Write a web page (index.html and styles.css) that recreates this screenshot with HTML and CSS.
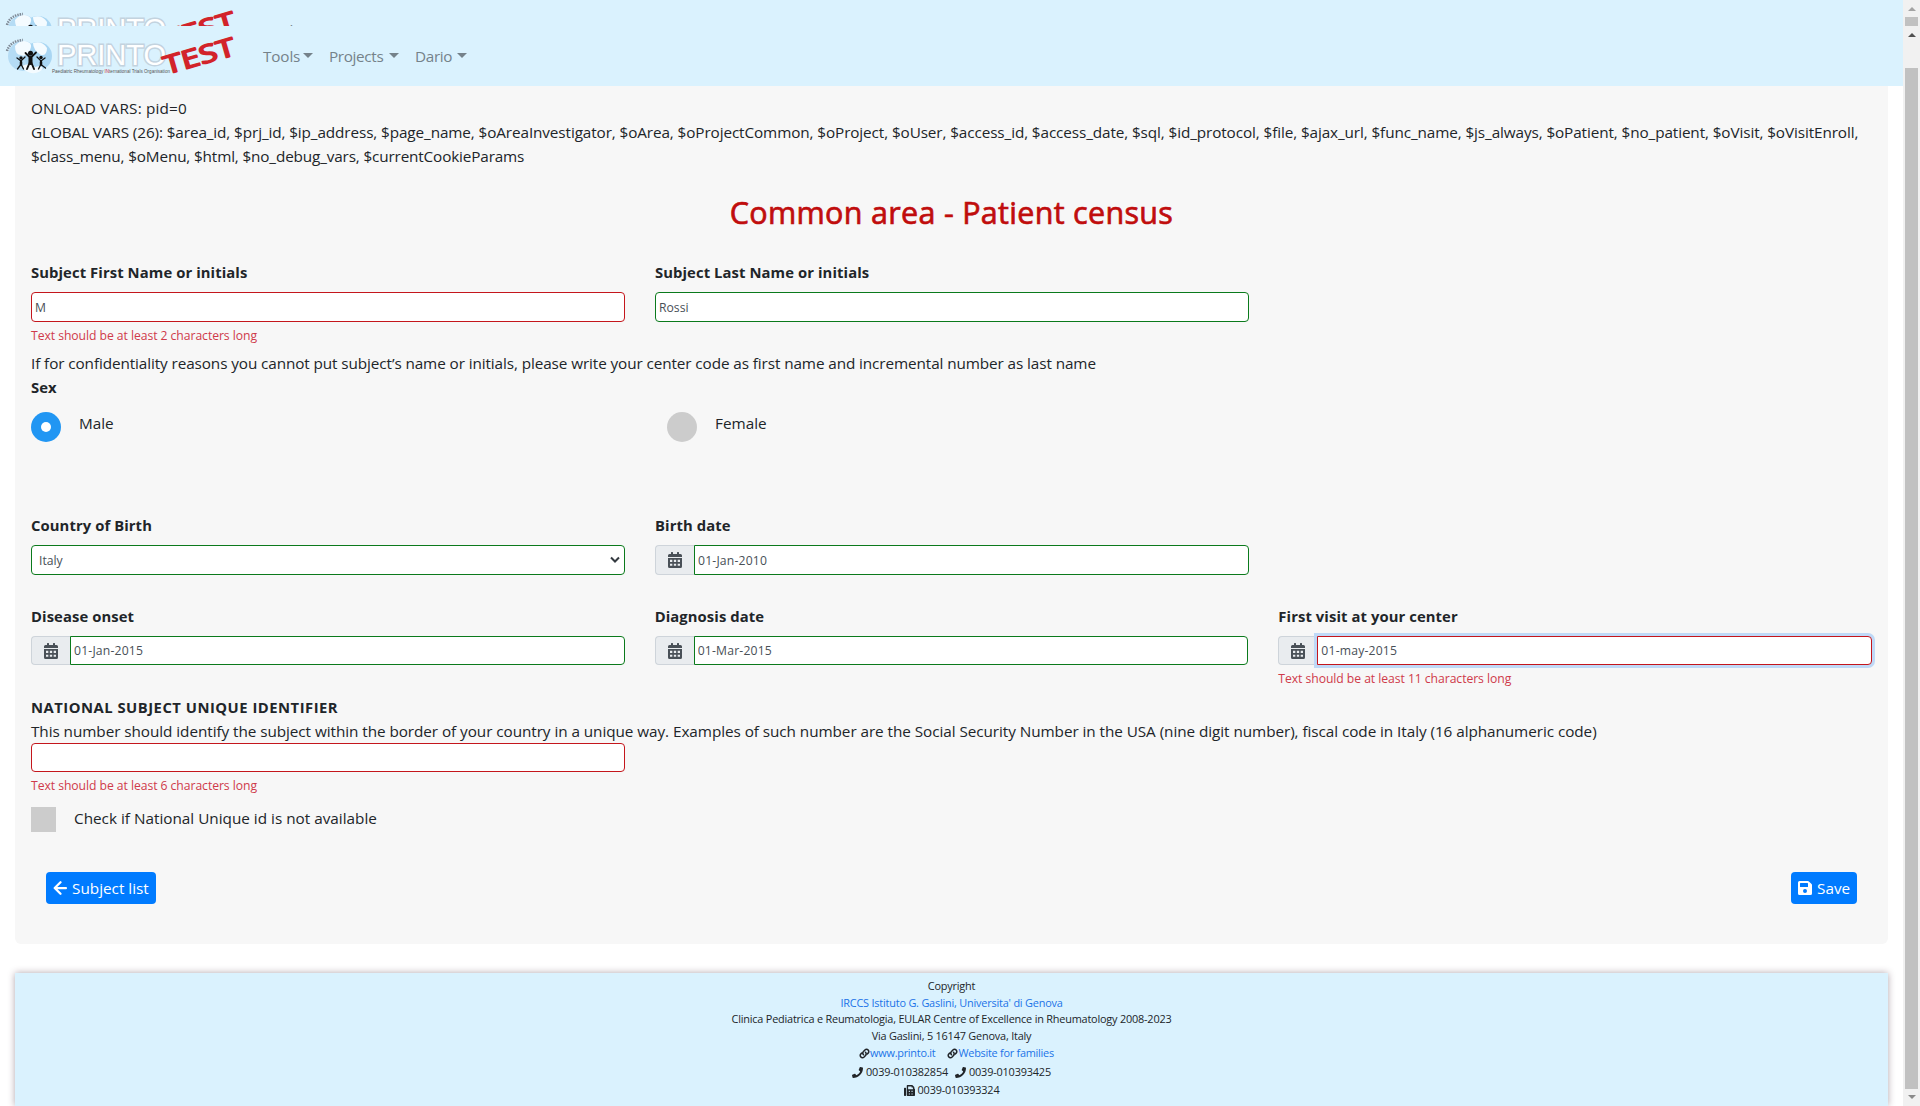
FILE: index.html
```html
<!DOCTYPE html>
<html lang="en">
<head>
<meta charset="utf-8">
<title>Common area - Patient census</title>
<link rel="stylesheet" href="styles.css">
</head>
<body>
<svg class="defs" aria-hidden="true">
  <symbol id="logo" viewBox="0 0 236 60">
    <circle cx="23" cy="30" r="15" fill="#b5dcf5"/>
    <circle cx="38" cy="30" r="14" fill="#a9d6f3"/>
    <path d="M15 20q6-7 13-4q5 2 2 8q-5 8-9 5q-6 0-6-9zM33 17q9-3 14 5q0 8-6 7q-8-5-8-12zM22 40q8-4 13 1q6-2 8 1q-3 6-12 5q-8-2-9-7z" fill="#f4fbff"/>
    <path d="M7 25Q10 15 23 14" fill="none" stroke="#7d8895" stroke-width="2.500" stroke-dasharray="1.500 1"/>
    <g stroke="#111" fill="none" stroke-linecap="round">
      <path d="M25.500 27l5 5l5.500-5.500" stroke-width="1.800"/><path d="M30.500 32v5" stroke-width="4"/><path d="M29.500 37l-2.500 6M31.500 37l2.500 6" stroke-width="1.900"/>
      <path d="M17 32l4 3l4-4M20.500 39l-3 4M21.500 39l2 4M37 31l4 4l4-3M40.500 39l-2 4M41.500 39l4 3" stroke-width="1.300"/><path d="M21 36v2.500M41 36v2.500" stroke-width="2.500"/>
    </g>
    <g fill="#111"><circle cx="30.500" cy="27.200" r="2.500"/><circle cx="21" cy="32" r="1.700"/><circle cx="41" cy="31.500" r="1.700"/></g>
    <text class="logo-name" x="57" y="39" textLength="109" lengthAdjust="spacingAndGlyphs">PRINTO</text>
    <text class="logo-sub" x="52" y="46.500" textLength="118" lengthAdjust="spacingAndGlyphs">Paediatric Rheumatology <tspan fill="#c33">IN</tspan>ternational Trials Organisation</text>
    <text class="logo-test" transform="translate(166.500 48.500) rotate(-16)" textLength="73" lengthAdjust="spacingAndGlyphs">TEST</text>
  </symbol>
  <symbol id="calendar" viewBox="0 0 448 512"><path d="M0 192h448v272a48 48 0 0 1-48 48H48a48 48 0 0 1-48-48zM0 160v-48a48 48 0 0 1 48-48h48V12a12 12 0 0 1 12-12h40a12 12 0 0 1 12 12v52h128V12a12 12 0 0 1 12-12h40a12 12 0 0 1 12 12v52h48a48 48 0 0 1 48 48v48z"/><path fill="#e9ecef" d="M64 250h74v66H64zM187 250h74v66h-74zM310 250h74v66h-74zM64 376h74v66H64zM187 376h74v66h-74zM310 376h74v66h-74z"/></symbol>
  <symbol id="arrow" viewBox="0 0 448 512"><path d="M240 70L55 256l185 186M65 256h350" fill="none" stroke="currentColor" stroke-width="72" stroke-linejoin="round" stroke-linecap="round"/></symbol>
  <symbol id="save" viewBox="0 0 448 512"><path fill-rule="evenodd" d="M433.900 129.900l-83.800-83.800A48 48 0 0 0 316.100 32H48A48 48 0 0 0 0 80v352a48 48 0 0 0 48 48h352a48 48 0 0 0 48-48V163.900a48 48 0 0 0-14.100-34zM224 416a64 64 0 1 1 0-128a64 64 0 0 1 0 128zm96-304.500V212a12 12 0 0 1-12 12H76a12 12 0 0 1-12-12V108a12 12 0 0 1 12-12h228.500z"/></symbol>
  <symbol id="link" viewBox="0 0 512 512"><g fill="none" stroke="currentColor" stroke-width="70" stroke-linecap="round"><path d="M210 310c-45-45-45-105 0-150l65-70c45-45 110-45 150 0s45 110 0 150l-40 42"/><path d="M302 202c45 45 45 105 0 150l-65 70c-45 45-110 45-150 0s-45-110 0-150l40-42"/></g></symbol>
  <symbol id="phone" viewBox="0 0 512 512"><path d="M493.400 24.600l-104-24c-11.300-2.600-22.900 3.300-27.500 13.900l-48 112c-4.200 9.800-1.400 21.300 6.900 28l60.600 49.600c-36 76.700-98.900 140.500-177.200 177.200l-49.600-60.600c-6.800-8.300-18.200-11.100-28-6.900l-112 48C3.900 366.500-2 378.100.6 389.400l24 104C27.100 504.200 36.700 512 48 512c256.100 0 464-207.500 464-464 0-11.200-7.700-20.900-18.600-23.400z"/></symbol>
  <symbol id="fax" viewBox="0 0 512 512"><path fill-rule="evenodd" d="M32 128h32a32 32 0 0 1 32 32v320a32 32 0 0 1-32 32H32a32 32 0 0 1-32-32V160a32 32 0 0 1 32-32zM160 0h224l96 96v64a32 32 0 0 1 32 32v288a32 32 0 0 1-32 32H160a32 32 0 0 1-32-32V32a32 32 0 0 1 32-32zM192 64v128h224v-80h-64V64zM224 272h50v50h-50zM350 272h50v50h-50zM224 390h50v50h-50zM350 390h50v50h-50z"/></symbol>
</svg>
<div class="window">
  <div class="page">
    <div class="nav-clip">
      <nav class="navbar"><svg class="logo"><use href="#logo"/></svg><span class="menu m1">Tools</span><span class="menu m2">Projects</span><span class="menu m3">Dario</span></nav>
    </div>
    <nav class="navbar"><svg class="logo"><use href="#logo"/></svg><span class="menu m1">Tools</span><span class="menu m2">Projects</span><span class="menu m3">Dario</span></nav>

    <main class="card">
      <p class="text debug"><span class="line d1">ONLOAD VARS: pid=0</span><span class="line d2">GLOBAL VARS (26): $area_id, $prj_id, $ip_address, $page_name, $oAreaInvestigator, $oArea, $oProjectCommon, $oProject, $oUser, $access_id, $access_date, $sql, $id_protocol, $file, $ajax_url, $func_name, $js_always, $oPatient, $no_patient, $oVisit, $oVisitEnroll,</span><span class="line d3">$class_menu, $oMenu, $html, $no_debug_vars, $currentCookieParams</span></p>
      <h2 class="title"><span>Common area - Patient census</span></h2>

      <div class="row names">
        <div class="col"><label class="label">Subject First Name or initials</label><input class="input bad" value="M"><p class="error">Text should be at least 2 characters long</p></div>
        <div class="col"><label class="label">Subject Last Name or initials</label><input class="input ok" value="Rossi"></div>
      </div>
      <p class="text hint">If for confidentiality reasons you cannot put subject’s name or initials, please write your center code as first name and incremental number as last name</p>
      <p class="label">Sex</p>
      <div class="sex">
        <label class="choice"><span class="radio on"></span><span class="text">Male</span></label>
        <label class="choice"><span class="radio"></span><span class="text">Female</span></label>
      </div>

      <div class="row birth">
        <div class="col"><label class="label">Country of Birth</label><div class="input select ok"><span>Italy</span><svg class="chevron" viewBox="0 0 10 8"><path d="M1 1.500l4 4l4-4" fill="none" stroke="#343a40" stroke-width="2"/></svg></div></div>
        <div class="col"><label class="label">Birth date</label><div class="group"><span class="addon"><svg class="cal"><use href="#calendar"/></svg></span><input class="input ok" value="01-Jan-2010"></div></div>
      </div>
      <div class="row dates">
        <div class="col"><label class="label">Disease onset</label><div class="group"><span class="addon"><svg class="cal"><use href="#calendar"/></svg></span><input class="input ok" value="01-Jan-2015"></div></div>
        <div class="col"><label class="label">Diagnosis date</label><div class="group"><span class="addon"><svg class="cal"><use href="#calendar"/></svg></span><input class="input ok" value="01-Mar-2015"></div></div>
        <div class="col"><label class="label">First visit at your center</label><div class="group"><span class="addon"><svg class="cal"><use href="#calendar"/></svg></span><input class="input bad focus" value="01-may-2015"></div><p class="error">Text should be at least 11 characters long</p></div>
      </div>

      <p class="label caps">NATIONAL SUBJECT UNIQUE IDENTIFIER</p>
      <p class="text national">This number should identify the subject within the border of your country in a unique way. Examples of such number are the Social Security Number in the USA (nine digit number), fiscal code in Italy (16 alphanumeric code)</p>
      <div class="row ident"><div class="col"><input class="input bad" value=""><p class="error">Text should be at least 6 characters long</p></div></div>
      <label class="check"><span class="box"></span><span class="text">Check if National Unique id is not available</span></label>

      <div class="actions">
        <button class="btn back"><svg class="ico"><use href="#arrow"/></svg><span>Subject list</span></button>
        <button class="btn save"><svg class="ico"><use href="#save"/></svg><span>Save</span></button>
      </div>
    </main>

    <footer class="footer">
      <p>Copyright</p>
      <p><a>IRCCS Istituto G. Gaslini, Universita' di Genova</a></p>
      <p>Clinica Pediatrica e Reumatologia, EULAR Centre of Excellence in Rheumatology 2008-2023</p>
      <p>Via Gaslini, 5 16147 Genova, Italy</p>
      <p class="links"><svg><use href="#link"/></svg><a>www.printo.it</a><svg class="second"><use href="#link"/></svg><a>Website for families</a></p>
      <p class="phones"><svg><use href="#phone"/></svg><span>0039-010382854</span><svg class="second"><use href="#phone"/></svg><span>0039-010393425</span></p>
      <p class="fax"><svg><use href="#fax"/></svg><span>0039-010393324</span></p>
    </footer>
  </div>
  <div class="scrollbar">
    <div class="scroll-top"><i class="up dim"></i><b></b></div>
    <i class="up"></i><b class="thumb"></b><i class="down"></i>
  </div>
</div>
</body>
</html>
```
FILE: styles.css
```css
* { box-sizing: border-box; }
body { margin: 0; background: #fff; color: #212529; font: 15.3px/24px "Open Sans", "Noto Sans", sans-serif; overflow: hidden; }
p, h2 { margin: 0; }
.defs { position: absolute; width: 0; height: 0; }
.window { display: flex; width: 1920px; height: 1106px; }
.page { width: 1903px; height: 1106px; display: flex; flex-direction: column; overflow: hidden; }

.nav-clip { height: 26px; overflow: hidden; flex: none; }
.navbar { height: 60px; flex: none; display: flex; align-items: center; background: #daf2fe; color: #75828a; }
.logo { width: 236px; height: 60px; margin-right: 27px; }
.logo-name { font: 30px "Liberation Sans", sans-serif; fill: #fff; stroke: #c3d3df; stroke-width: 3px; paint-order: stroke; }
.logo-sub { font: 5px "Liberation Sans", sans-serif; fill: #555; }
.logo-test { font: 25px "Open Sans", sans-serif; fill: #d2232a; stroke: #d2232a; stroke-width: 1.7px; stroke-linejoin: round; }
.menu { display: flex; align-items: center; justify-content: space-between; height: 24px; margin-right: 16px; white-space: nowrap; letter-spacing: -.15px; }
.menu::after { content: ""; border: 5px solid transparent; border-top-color: currentColor; border-bottom: 0; margin-top: -2px; }
.m1 { width: 50px; }
.m2 { width: 70px; letter-spacing: -.35px; }
.m3 { width: 52px; letter-spacing: -.35px; }

.card { flex: none; height: 858px; margin: 0 15px; padding: 10px 16px 0; background: #f7f7f7; border-radius: 0 0 6px 6px; }
.text { white-space: nowrap; }
.line { display: block; }
.d1 { letter-spacing: .18px; }
.d2 { letter-spacing: -.106px; }
.d3 { letter-spacing: -.15px; }
.hint { letter-spacing: -.1px; }
.national { letter-spacing: -.062px; }
.title { margin-top: 25px; height: 38px; text-align: center; color: #c00d0d; font: 500 30.500px/38px "Open Sans", sans-serif; letter-spacing: .3px; -webkit-text-stroke: .7px #c00d0d; }
.row { display: flex; gap: 30px; }
.col { width: 594px; display: flex; flex-direction: column; }
.label { display: block; font-weight: 700; font-size: 14.800px; line-height: 24px; letter-spacing: .09px; }
.caps { letter-spacing: .5px; }
.col .label { margin-bottom: 8px; }
.input { width: 100%; height: 30px; padding: 0 3px; border: 1px solid; border-radius: 4px; background: #fff; color: #495057; font: 12.200px "Open Sans", sans-serif; outline: 0; }
.ok { border-color: #0b7a1c; }
.bad { border-color: #c4161c; }
.error { margin-top: 4px; height: 21px; font-size: 12.200px; line-height: 20px; letter-spacing: -.06px; color: #cf3a4a; white-space: nowrap; }
.names { margin-top: 29px; height: 91px; }
.sex { display: flex; gap: 12px; margin-top: 13px; height: 101px; }
.choice { width: 624px; display: flex; gap: 18px; }
.radio { width: 30px; height: 30px; border-radius: 50%; background: #ccc; display: grid; place-items: center; }
.radio.on { background: #2196f3; }
.radio.on::after { content: ""; width: 10px; height: 10px; border-radius: 50%; background: #fff; }
.birth { height: 91px; }
.select { display: flex; align-items: center; justify-content: space-between; padding: 0 4px 0 7px; }
.chevron { width: 10px; height: 8px; }
.group { display: flex; }
.group .input { flex: 1; border-radius: 0 4px 4px 0; letter-spacing: .18px; }
.addon { width: 39px; display: grid; place-items: center; background: #e9ecef; border: 1px solid #ced4da; border-right: 0; border-radius: 4px 0 0 4px; color: #495057; }
.cal { width: 14px; height: 16px; fill: currentColor; }
.focus { box-shadow: 0 0 0 3px #bfd9f7; }
.dates { height: 91px; }
.dates .input, .ident .input { height: 29px; }
.check { display: flex; gap: 18px; margin-top: 10px; height: 25px; }
.box { width: 25px; height: 25px; background: #ccc; }
.choice .text, .check .text { margin-top: -1px; }
.actions { display: flex; justify-content: space-between; margin-top: 40px; padding: 0 15px; }
.btn { display: flex; align-items: center; gap: 5px; height: 32px; padding: 0 7px; border: 0; border-radius: 4px; background: #007bff; color: #fff; font: 15.300px "Open Sans", sans-serif; white-space: nowrap; }
.back { width: 110px; }
.save { width: 66px; }
.ico { width: 14px; height: 16px; fill: currentColor; flex: none; }

.footer { flex: 1; margin: 29px 15px 0; padding-top: 5px; background: #daf2fe; box-shadow: 0 0 7px rgba(60, 30, 50, .4); font-size: 10.900px; line-height: 16.700px; letter-spacing: -.2px; text-align: center; }
.footer a { color: #1a73e8; }
.footer svg { width: 11px; height: 11px; fill: currentColor; flex: none; }
.links, .phones, .fax { display: flex; justify-content: center; align-items: center; }
.links { padding-left: 10px; letter-spacing: -.25px; }
.phones, .fax { height: 18px; gap: 3px; letter-spacing: -.18px; }
.phones { margin-top: 2px; }
.links .second { margin-left: 12px; }
.phones .second { margin-left: 4px; }

.scrollbar { width: 17px; background: #f1f1f1; display: flex; flex-direction: column; align-items: center; }
.scroll-top { height: 26px; display: flex; flex-direction: column; align-items: center; padding-top: 7px; }
.scroll-top b { width: 13px; height: 9px; margin-top: 6px; background: #c1c1c1; }
.up { border: 4px solid transparent; border-top: 0; border-bottom-color: #505050; margin-top: 7px; }
.up.dim { margin: 0; border-bottom-color: #a3a3a3; }
.thumb { width: 13px; height: 1021px; margin-top: 31px; background: #c1c1c1; }
.down { border: 4px solid transparent; border-bottom: 0; border-top-color: #8a8a8a; margin-top: 6px; }
```
